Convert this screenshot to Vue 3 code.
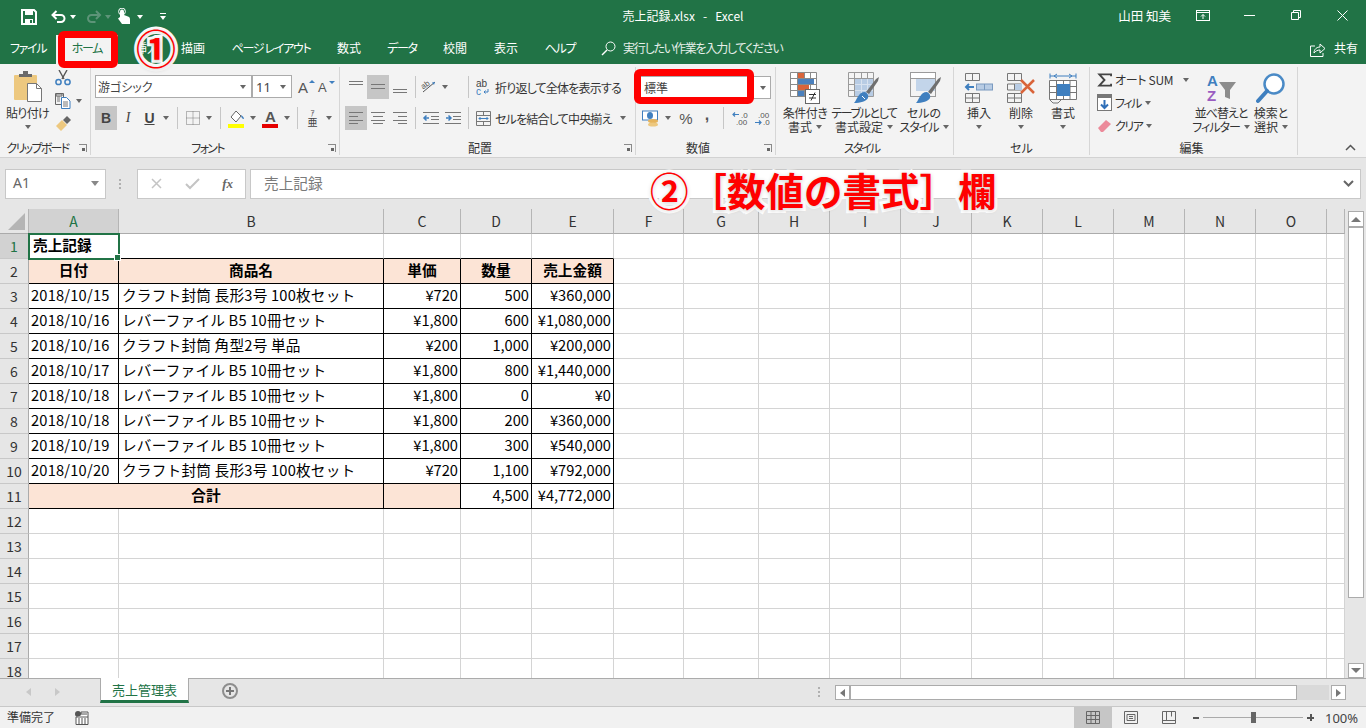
<script setup>
const tabs = [
  { t: 'ファイル', w: 56, k: true }, { t: 'ホーム', w: 62, on: true, k: true }, { t: '挿入', w: 58 }, { t: '描画', w: 34 },
  { t: 'ページ レイアウト', w: 122, k: true }, { t: '数式', w: 34 }, { t: 'データ', w: 72, k: true }, { t: '校閲', w: 34 },
  { t: '表示', w: 68 }, { t: 'ヘルプ', w: 40, k: true }
]
const colW = [90, 265, 77, 71, 82, 70, 75, 71, 71, 71, 71, 71, 71, 71, 71, 18]
const colN = ['A','B','C','D','E','F','G','H','I','J','K','L','M','N','O','']
const gridCols = '29px ' + colW.map(w => w + 'px').join(' ')
const A = 'クラフト封筒 長形3号 100枚セット'
const B = 'レバーファイル B5 10冊セット'
const data = [
  ['2018/10/15', A, '¥720', '500', '¥360,000'],
  ['2018/10/16', B, '¥1,800', '600', '¥1,080,000'],
  ['2018/10/16', 'クラフト封筒 角型2号 単品', '¥200', '1,000', '¥200,000'],
  ['2018/10/17', B, '¥1,800', '800', '¥1,440,000'],
  ['2018/10/18', B, '¥1,800', '0', '¥0'],
  ['2018/10/18', B, '¥1,800', '200', '¥360,000'],
  ['2018/10/19', B, '¥1,800', '300', '¥540,000'],
  ['2018/10/20', A, '¥720', '1,100', '¥792,000']
]
const cells = []
for (let r = 1; r <= 18; r++) {
  cells.push({ k: 'h' + r, t: r, c: r === 1 ? 'rh rh-on' : 'rh' })
  for (let i = 0; i < 16; i++) {
    const k = r + '-' + i
    if (r === 1) {
      cells.push({ k, t: i === 0 ? '売上記録' : '', c: i === 0 ? 'cell sel bold lp' : i < 5 ? 'cell bb' : 'cell' })
    } else if (r === 2 && i < 5) {
      cells.push({ k, t: ['日付','商品名','単価','数量','売上金額'][i], c: 'cell bk peach bold ctr' })
    } else if (r >= 3 && r <= 10 && i < 5) {
      cells.push({ k, t: data[r-3][i], c: 'cell bk ' + (i === 0 ? 'dp' : i === 1 ? 'np' : 'rt') })
    } else if (r === 11 && i < 5) {
      if (i === 0) cells.push({ k, t: '合計', c: 'cell bk peach bold ctr span2' })
      else if (i === 2) cells.push({ k, t: '', c: 'cell bk peach' })
      else if (i === 3) cells.push({ k, t: '4,500', c: 'cell bk rt' })
      else if (i === 4) cells.push({ k, t: '¥4,772,000', c: 'cell bk rt' })
    } else {
      cells.push({ k, t: '', c: 'cell' })
    }
  }
}
</script>

<template>
  <div class="app">
    <header class="title">
      <div class="qat">
        <svg class="q1" width="16" height="16" viewBox="0 0 16 16"><path d="M1 1h12l2 2v12H1z" fill="none" stroke="#fff" stroke-width="2"/><rect x="4" y="2" width="8" height="4" fill="#fff"/><rect x="4" y="10" width="8" height="5" fill="#fff"/><rect x="9" y="11" width="2" height="3" fill="#217346"/></svg>
        <svg class="q2" width="15" height="13" viewBox="0 0 15 13"><path d="M2 5h8a3.500 3.500 0 0 1 0 7H6" fill="none" stroke="#fff" stroke-width="2"/><path d="M5.500 1L1.500 5l4 4" fill="none" stroke="#fff" stroke-width="2"/></svg>
        <i class="car w q3"></i>
        <svg class="q4" width="16" height="13" viewBox="0 0 15 13"><path d="M13 5H5a3.500 3.500 0 0 0 0 7h4" fill="none" stroke="#5d9478" stroke-width="2"/><path d="M9.500 1l4 4-4 4" fill="none" stroke="#5d9478" stroke-width="2"/></svg>
        <i class="car m q5"></i>
        <svg class="q6" width="14" height="17" viewBox="0 0 14 17"><path d="M3 7V3.500a2 2 0 0 1 4 0V7l4 1.500c1.500.6 2 1.400 2 3V16H5L1 10.500 3 9z" fill="#fff"/><circle cx="5" cy="3.500" r="3.400" fill="none" stroke="#fff"/></svg>
        <i class="car w q7"></i>
        <span class="q8"><b></b><i class="car w"></i></span>
      </div>
      <div class="doc">売上記録.xlsx &nbsp;&nbsp;-&nbsp;&nbsp; Excel</div>
      <div class="win">
        <span class="user">山田 知美</span>
        <svg class="wi1" width="14" height="11" viewBox="0 0 14 11"><rect x=".5" y=".5" width="13" height="10" fill="none" stroke="#fff"/><path d="M1 2.500h12M7 9V4.500M5 6.500l2-2 2 2" fill="none" stroke="#fff"/></svg>
        <svg class="wi2" width="11" height="3" viewBox="0 0 11 3"><path d="M0 1.500h11" stroke="#fff"/></svg>
        <svg class="wi3" width="10" height="10" viewBox="0 0 10 10"><path d="M.5 2.500h7v7h-7zM2.500 2.500v-2h7v7h-2" fill="none" stroke="#fff"/></svg>
        <svg class="wi4" width="11" height="11" viewBox="0 0 11 11"><path d="M.5.500l10 10M10.500.500l-10 10" stroke="#fff"/></svg>
      </div>
    </header>

    <nav class="tabs">
      <span v-for="t in tabs" :key="t.t" class="tab" :class="{ on: t.on, k: t.k }" :style="{ width: t.w + 'px' }">{{ t.t }}</span>
      <svg class="lens" width="15" height="15" viewBox="0 0 15 15"><circle cx="9.500" cy="5.500" r="4.500" fill="none" stroke="#fff"/><path d="M6 9l-5 5" stroke="#fff" stroke-width="1.400"/></svg>
      <span class="tell">実行したい作業を入力してください</span>
      <span class="share">
        <svg width="16" height="15" viewBox="0 0 16 15"><path d="M5 4H.5v10.500H13V11" fill="none" stroke="#fff"/><path d="M4 11c0-4 3-6 6-6V2l5 4.500-5 4.500V8c-2.500 0-4.500 1-6 3z" fill="none" stroke="#fff"/></svg>
        <span class="sh">共有</span>
      </span>
    </nav>

    <section class="ribbon">
      <!-- クリップボード -->
      <div class="group g1">
        <div class="gbody row">
          <div class="bigb paste">
            <svg width="30" height="32" viewBox="0 0 30 32"><rect x="1" y="5" width="23" height="25" rx="1" fill="#edc87f"/><path d="M6 7V4h4V1h5v3h4v3z" fill="#6a6a6a"/><path d="M14.500 13.500h9l5 5v13h-14z" fill="#fff" stroke="#777"/><path d="M23.500 13.500v5h5" fill="none" stroke="#777"/></svg>
            <span class="bt t7">貼り付け</span>
            <span class="bt"><i class="car"></i></span>
          </div>
          <div class="cbcol">
            <svg width="16" height="16" viewBox="0 0 16 16"><path d="M4 0l5 9M12 0L7 9" stroke="#555" stroke-width="1.400"/><circle cx="3.500" cy="12" r="2.600" fill="none" stroke="#3f7fbf" stroke-width="1.500"/><circle cx="12.500" cy="12" r="2.600" fill="none" stroke="#3f7fbf" stroke-width="1.500"/></svg>
            <span class="cpy">
              <svg width="16" height="16" viewBox="0 0 16 16"><path d="M1 1h6v2H1zM.5.500h8v11h-8z" fill="none" stroke="#666"/><path d="M6.500 4.500h5l3.500 3.500v7.500h-8.500z" fill="#fff" stroke="#3f7fbf"/><path d="M8 9h5M8 11h5M8 13h5M2 4h3M2 6h3M2 8h3" stroke="#777"/></svg>
              <i class="car"></i>
            </span>
            <svg width="16" height="16" viewBox="0 0 16 16"><path d="M1 10l6-6 5 5-6 6z" fill="#edc87f"/><path d="M9 3l3-3 4 4-3 3 -1 1-4-4z" fill="#666"/></svg>
          </div>
        </div>
        <div class="glabel lab1">クリップボード<i class="launch"></i></div>
      </div>

      <!-- フォント -->
      <div class="group g2">
        <div class="gbody stack">
          <div class="srow">
            <span class="combo fn">游ゴシック<i class="car"></i></span>
            <span class="combo fs">11<i class="car"></i></span>
            <span class="aup">A<em class="tri up"></em></span>
            <span class="adn">A<em class="tri dn"></em></span>
          </div>
          <div class="srow">
            <span class="b w22 pressed fb">B</span>
            <span class="b w22 fi">I</span>
            <span class="b w21 fu">U</span>
            <span class="b w12"><i class="car"></i></span>
            <span class="sep w10"></span>
            <span class="b w21">
              <svg width="14" height="14" viewBox="0 0 14 14"><path d="M.5.500h13v13H.5zM7 .500v13M.5 7h13" fill="none" stroke="#777" stroke-dasharray="1 1"/></svg>
            </span>
            <span class="b w12"><i class="car"></i></span>
            <span class="sep w10"></span>
            <span class="b w22 colb">
              <svg width="17" height="19" viewBox="0 0 17 19"><path d="M3 8l5-6 5 5-5 6z" fill="#fff" stroke="#666"/><path d="M13 6c2 1 3 3 3 4-2 0-3-2-3-4z" fill="#3f7fbf"/><rect x="0" y="15" width="16" height="4" fill="#ffff00"/></svg>
            </span>
            <span class="b w12"><i class="car"></i></span>
            <span class="b w22 colb">
              <svg width="17" height="19" viewBox="0 0 17 19"><text x="8.500" y="13" font-size="15" text-anchor="middle" fill="#555" font-family="Liberation Sans, sans-serif" font-weight="700">A</text><rect x="0" y="15" width="16" height="4" fill="#e60000"/></svg>
            </span>
            <span class="b w11"><i class="car"></i></span>
            <span class="sep w10"></span>
            <span class="b w21 ruby"><small>ｱ</small><b>亜</b></span>
            <span class="b w12"><i class="car"></i></span>
          </div>
        </div>
        <div class="glabel lab2">フォント<i class="launch"></i></div>
      </div>

      <!-- 配置 -->
      <div class="group g3">
        <div class="gbody stack">
          <div class="srow">
            <span class="b w22"><svg width="16" height="14" viewBox="0 0 16 14"><path d="M1 1.500h14M1 4.500h14" stroke="#777"/></svg></span>
            <span class="b w22 pressed"><svg width="16" height="14" viewBox="0 0 16 14"><path d="M1 4.500h14M1 8.500h14" stroke="#777"/></svg></span>
            <span class="b w22"><svg width="16" height="14" viewBox="0 0 16 14"><path d="M1 9.500h14M1 12.500h14" stroke="#777"/></svg></span>
            <span class="sep w8"></span>
            <span class="b w22"><svg class="ovis" width="18" height="16" viewBox="0 0 18 16"><path d="M2 13L14 3" stroke="#555"/><path d="M14 3l-3 .5 2 2.500z" fill="#3f7fbf"/><text x="1" y="9" font-size="8" fill="#555" font-family="Liberation Sans, sans-serif" transform="rotate(-35 4 8)">ab</text></svg></span>
            <span class="b w8"><i class="car"></i></span>
            <span class="sep w38"></span>
            <svg class="wrapi" width="14" height="17" viewBox="0 0 14 17"><text x="0" y="8" font-size="10" fill="#444" font-family="Liberation Sans, sans-serif">ab</text><text x="0" y="16" font-size="10" fill="#3f7fbf" font-family="Liberation Sans, sans-serif">c</text><path d="M12 10v3H8M9.500 11.500L8 13l1.500 1.500" fill="none" stroke="#3f7fbf"/></svg>
            <span class="lt lt2">折り返して全体を表示する</span>
          </div>
          <div class="srow">
            <span class="b w22 pressed"><svg width="16" height="14" viewBox="0 0 16 14"><path d="M1 1.500h14M1 5.500h9M1 9.500h14M1 12.500h9" stroke="#777"/></svg></span>
            <span class="b w22"><svg width="16" height="14" viewBox="0 0 16 14"><path d="M1 1.500h14M3 5.500h10M1 9.500h14M3 12.500h10" stroke="#777"/></svg></span>
            <span class="b w22"><svg width="16" height="14" viewBox="0 0 16 14"><path d="M1 1.500h14M6 5.500h9M1 9.500h14M6 12.500h9" stroke="#777"/></svg></span>
            <span class="sep w8"></span>
            <span class="b w22"><svg width="17" height="14" viewBox="0 0 17 14"><path d="M1 1.500h16M9 5.500h8M9 8.500h8M1 12.500h16" stroke="#777"/><path d="M7 7H3M4.500 4.500L2 7l2.500 2.500" fill="none" stroke="#3f7fbf" stroke-width="1.500"/></svg></span>
            <span class="b w22"><svg width="17" height="14" viewBox="0 0 17 14"><path d="M1 1.500h16M9 5.500h8M9 8.500h8M1 12.500h16" stroke="#777"/><path d="M2 7h4M4.500 4.500L7 7 4.500 9.500" fill="none" stroke="#3f7fbf" stroke-width="1.500"/></svg></span>
            <span class="sep w10"></span>
            <svg class="mergei" width="15" height="15" viewBox="0 0 15 15"><path d="M.5.500h14v14H.5zM.5 4.500h14M.5 10.500h14M7.500.500v4M7.500 10.500v4" fill="none" stroke="#777"/><path d="M3 7.500h9M4.500 6L3 7.500 4.500 9M10.500 6L12 7.500 10.500 9" fill="none" stroke="#3f7fbf"/></svg>
            <span class="lt lt2">セルを結合して中央揃え</span>
            <i class="car mcar"></i>
          </div>
        </div>
        <div class="glabel">配置<i class="launch"></i></div>
      </div>

      <!-- 数値 -->
      <div class="group g4">
        <div class="gbody stack">
          <div class="srow">
            <span class="combo nf">標準<i class="car"></i></span>
          </div>
          <div class="srow">
            <span class="b w22 cur">
              <svg width="17" height="17" viewBox="0 0 17 17"><rect x=".5" y="1" width="15" height="9" fill="#fff" stroke="#3f7fbf"/><ellipse cx="8" cy="5.500" rx="3" ry="3.500" fill="#3f7fbf"/><ellipse cx="11" cy="11" rx="5" ry="2" fill="#e6b45c"/><ellipse cx="11" cy="14.500" rx="5" ry="2" fill="#edc87f"/></svg>
            </span>
            <span class="b w13"><i class="car"></i></span>
            <span class="b w24 pct">%</span>
            <span class="b w18 cma">,</span>
            <span class="sep w14"></span>
            <span class="b w22 dec"><svg width="18" height="15" viewBox="0 0 18 15"><path d="M1 3.500h6M3 1.500L1 3.500l2 2" fill="none" stroke="#3f7fbf" stroke-width="1.200"/><text x="9" y="7" font-size="8" fill="#555" font-family="Liberation Sans, sans-serif">.0</text><text x="4" y="14" font-size="8" fill="#555" font-family="Liberation Sans, sans-serif">.00</text></svg></span>
            <span class="b w22 dec"><svg width="18" height="15" viewBox="0 0 18 15"><path d="M1 11.500h6M5 9.500l2 2-2 2" fill="none" stroke="#3f7fbf" stroke-width="1.200"/><text x="4" y="7" font-size="8" fill="#555" font-family="Liberation Sans, sans-serif">.00</text><text x="9" y="14" font-size="8" fill="#555" font-family="Liberation Sans, sans-serif">.0</text></svg></span>
          </div>
        </div>
        <div class="glabel">数値<i class="launch"></i></div>
      </div>

      <!-- スタイル -->
      <div class="group g5">
        <div class="gbody row">
          <div class="bigb w58">
            <svg width="30" height="32" viewBox="0 0 30 32"><path d="M.5.500h26v24H.5zM.5 6.500h26M.5 12.500h26M.5 18.500h26M7.500.500v24M14.500.500v24M20.500.500v24" fill="#fff" stroke="#8a8a8a"/><rect x="8" y="1" width="6" height="5" fill="#d9643a"/><rect x="8" y="7" width="16" height="5" fill="#4a80bd"/><rect x="8" y="13" width="11" height="5" fill="#d9643a"/><rect x="8" y="19" width="6" height="5" fill="#4a80bd"/><rect x="15.500" y="17.500" width="14" height="14" fill="#fff" stroke="#666"/><path d="M19 22.500h7M19 26h7M25 20.500l-4 8" stroke="#333"/></svg>
            <span class="bt t5">条件付き</span>
            <span class="bt">書式<i class="car ml"></i></span>
          </div>
          <div class="bigb w60">
            <svg width="32" height="32" viewBox="0 0 32 32"><path d="M.5.500h25v24H.5zM.5 6.500h25M.5 12.500h25M.5 18.500h25M6.500.500v24M13.500.500v24M19.500.500v24" fill="#f4f4f4" stroke="#9a9a9a"/><rect x="7" y="7" width="18" height="17" fill="#b8cce4"/><path d="M7 12.500h18M7 18.500h18M13.500 7v17M19.500 7v17" stroke="#d8e2ef"/><path d="M18 20L28 7l3-2-1 4-9 13z" fill="#6f6f6f"/><path d="M17 20c2 1 4 3 3 6-1 3-8 5-14 5 3-3 4-11 11-11z" fill="#3f7fbf"/><path d="M14 24l3 3" stroke="#fff"/></svg>
            <span class="bt t14">テーブルとして</span>
            <span class="bt">書式設定<i class="car ml"></i></span>
          </div>
          <div class="bigb w60">
            <svg width="34" height="32" viewBox="0 0 34 32"><rect x="3.500" y=".5" width="25" height="24" fill="#f4f4f4" stroke="#9a9a9a"/><rect x="3.500" y=".5" width="25" height="6" fill="#fff" stroke="#9a9a9a"/><rect x="9" y="7" width="19" height="12" fill="#c3d5ea"/><path d="M21 20L31 7l3-2-1 4-9 13z" fill="#6f6f6f"/><path d="M20 20c2 1 4 3 3 6-1 3-8 5-14 5 3-3 4-11 11-11z" fill="#3f7fbf"/></svg>
            <span class="bt">セルの</span>
            <span class="bt"><span class="t10">スタイル</span><i class="car ml"></i></span>
          </div>
        </div>
        <div class="glabel lab5">スタイル</div>
      </div>

      <!-- セル -->
      <div class="group g6">
        <div class="gbody row">
          <div class="bigb w42">
            <svg width="30" height="32" viewBox="0 0 30 32"><path d="M1.500 1.500h14v7h-14zM8.500 1.500v7M1.500 21.500h14v9h-14zM8.500 21.500v9M1.500 26h14" fill="none" stroke="#777"/><rect x="12.500" y="12" width="16" height="6" fill="#b8cce4" stroke="#7a9ac0"/><path d="M20.500 12v6" stroke="#7a9ac0"/><path d="M10 15H2M5 12l-3 3 3 3" fill="none" stroke="#3f7fbf" stroke-width="2"/></svg>
            <span class="bt">挿入</span>
            <span class="bt"><i class="car"></i></span>
          </div>
          <div class="bigb w42">
            <svg width="30" height="32" viewBox="0 0 30 32"><path d="M1.500 1.500h14v7h-14zM8.500 1.500v7M1.500 21.500h14v9h-14zM8.500 21.500v9M1.500 26h14M1.500 12h14v6h-14zM8.500 12v6" fill="none" stroke="#777"/><rect x="9" y="12" width="7" height="6" fill="#b8cce4"/><path d="M15 8l13 13M28 8L15 21" stroke="#d9643a" stroke-width="2.500"/></svg>
            <span class="bt">削除</span>
            <span class="bt"><i class="car"></i></span>
          </div>
          <div class="bigb w42">
            <svg width="28" height="32" viewBox="0 0 28 32"><path d="M1 4h26M1 1.500v5M27 1.500v5M5 4l3-2M5 4l3 2M23 4l-3-2M23 4l-3 2" fill="none" stroke="#3f7fbf"/><path d="M.5 8.500h27v19H.5zM.5 14.500h27M.5 20.500h27M7.500 8.500v19M14.500 8.500v19M21 8.500v19" fill="#fff" stroke="#777"/><rect x="8" y="12" width="13" height="12" fill="#3f7fbf"/><path d="M1 28l3 3 5 0 3-3" fill="none" stroke="#777"/></svg>
            <span class="bt">書式</span>
            <span class="bt"><i class="car"></i></span>
          </div>
        </div>
        <div class="glabel nop">セル</div>
      </div>

      <!-- 編集 -->
      <div class="group g7">
        <div class="gbody row">
          <div class="edcol">
            <div class="edr">
              <svg width="16" height="16" viewBox="0 0 16 16"><path d="M15 4V2H2.500l5.500 6-5.500 6H15v-2" fill="none" stroke="#444" stroke-width="2"/></svg>
              <span class="sum">オート SUM</span><i class="car c1"></i>
            </div>
            <div class="edr">
              <svg width="15" height="17" viewBox="0 0 15 17"><rect x=".5" y=".5" width="14" height="16" fill="#fff" stroke="#777"/><rect x="1" y="1" width="13" height="3" fill="#777"/><path d="M7.500 6v8M4 10.500l3.500 3.500 3.500-3.500" fill="none" stroke="#2f6fb8" stroke-width="2"/></svg>
              <span class="t15">フィル</span><i class="car c2"></i>
            </div>
            <div class="edr">
              <svg width="15" height="15" viewBox="0 0 15 15"><path d="M1 10l8-8 5 4-8 8H4z" fill="#ec8a9a"/></svg>
              <span class="t15">クリア</span><i class="car c2"></i>
            </div>
          </div>
          <div class="bigb w52">
            <svg class="ovis" width="32" height="32" viewBox="0 0 32 32"><text x="2" y="14" font-size="15" font-weight="700" fill="#3f7fbf" font-family="Liberation Sans, sans-serif">A</text><text x="2" y="29" font-size="15" font-weight="700" fill="#9a5cc0" font-family="Liberation Sans, sans-serif">Z</text><path d="M14 10h17l-6 8v9l-5-2v-7z" fill="#8c8c8c"/></svg>
            <span class="bt t10">並べ替えと</span>
            <span class="bt"><span class="t10">フィルター</span><i class="car ml"></i></span>
          </div>
          <div class="bigb w48">
            <svg width="30" height="32" viewBox="0 0 30 32"><circle cx="18" cy="12" r="9.500" fill="#fff" stroke="#4a8ac6" stroke-width="2.500"/><path d="M11 19L2 29" stroke="#3f7fbf" stroke-width="4" stroke-linecap="round"/></svg>
            <span class="bt">検索と</span>
            <span class="bt">選択<i class="car ml"></i></span>
          </div>
        </div>
        <div class="glabel nop2">編集</div>
      </div>
      <svg class="collapse" width="11" height="7" viewBox="0 0 11 7"><path d="M1 6l4.500-4.500L10 6" fill="none" stroke="#555" stroke-width="1.500"/></svg>
    </section>

    <section class="fbar">
      <div class="name"><span>A1</span><i class="car dk"></i></div>
      <span class="dots"></span>
      <div class="fbtns">
        <svg width="13" height="13" viewBox="0 0 13 13"><path d="M2 2l9 9M11 2l-9 9" stroke="#c4c4c4" stroke-width="1.500"/></svg>
        <svg width="15" height="13" viewBox="0 0 15 13"><path d="M1 7l4 4 9-9" fill="none" stroke="#c4c4c4" stroke-width="2"/></svg>
        <span class="fx">fx</span>
      </div>
      <div class="finput"><span>売上記録</span>
        <svg width="11" height="7" viewBox="0 0 11 7"><path d="M1 1l4.500 4.500L10 1" fill="none" stroke="#666" stroke-width="2"/></svg>
      </div>
    </section>

    <section class="sheet">
      <div class="grid" :style="{ gridTemplateColumns: gridCols }">
        <div class="corner"><b></b></div>
        <div v-for="(n, i) in colN" :key="'c' + i" class="ch" :class="{ 'ch-on': i === 0 }">{{ n }}</div>
        <div v-for="c in cells" :key="c.k" :class="c.c">{{ c.t }}</div>
      </div>
      <aside class="vs">
        <span class="sb"><i class="tri2 up2"></i></span>
        <span class="thumb"></span>
        <span class="sb end"><i class="tri2 dn2"></i></span>
      </aside>
    </section>

    <section class="tabbar">
      <span class="nav"><i class="nl"></i><i class="nr"></i></span>
      <span class="stab">売上管理表</span>
      <span class="plus"></span>
      <span class="hdots"></span>
      <div class="hs">
        <span class="hb"><i class="hl"></i></span>
        <span class="hthumb"></span>
        <span class="htrack"></span>
        <span class="hb"><i class="hr"></i></span>
      </div>
    </section>

    <footer class="status">
      <span>準備完了</span>
      <svg class="macro" width="14" height="14" viewBox="0 0 14 14"><circle cx="3" cy="3" r="3" fill="#555"/><path d="M1 6h12V1H6v2h6v0M1 6v7.500h12V6" fill="#fff" stroke="#555"/><path d="M3 8h2M6 8h2M9 8h2M3 10h2M6 10h2M9 10h2M3 12h2M6 12h2M9 12h2" stroke="#555"/></svg>
      <div class="views">
        <span class="vb von"><svg width="14" height="13" viewBox="0 0 14 13"><path d="M.5.500h13v12H.5zM.5 4.500h13M.5 8.500h13M5 .500v12M9.500.500v12" fill="none" stroke="#666"/></svg></span>
        <span class="vb"><svg width="14" height="13" viewBox="0 0 14 13"><path d="M.5.500h13v12H.5z" fill="none" stroke="#666"/><path d="M3 3.500h8v6H3zM5 5.500h4M5 7.500h4" fill="none" stroke="#666"/></svg></span>
        <span class="vb"><svg width="14" height="13" viewBox="0 0 14 13"><path d="M.5.500h13v12H.5zM.5 9.500h13M4.500.500v9M9.500.500v5" fill="none" stroke="#666"/></svg></span>
      </div>
      <div class="zoom">
        <span class="zm"></span>
        <span class="slider"><b></b></span>
        <span class="zp"></span>
        <span class="pc">100%</span>
      </div>
    </footer>

    <!-- 注釈 -->
    <div class="red red1"></div>
    <div class="red red2"></div>
    <div class="no1">①</div>
    <div class="note">②［数値の書式］欄</div>
  </div>
</template>

<style>
html, body { margin: 0; overflow: hidden; background: #fff; }
</style>

<style scoped>
.app {
  position: relative; width: 1366px; height: 728px; overflow: hidden; display: flex; flex-direction: column;
  font-family: "Noto Sans CJK JP", "Noto Sans", sans-serif; font-size: 12px; color: #333;
  font-feature-settings: "palt";
}
i { display: inline-block; font-style: normal; }
svg { display: block; flex: none; }
.ovis { overflow: visible; }
.car { width: 0; height: 0; border-left: 3.5px solid transparent; border-right: 3.5px solid transparent; border-top: 4px solid #666; vertical-align: middle; flex: none; }
.car.w { border-top-color: #fff; }
.car.m { border-top-color: #5d9478; }
.car.ml { margin-left: 4px; }
.t5 { letter-spacing: -.5px; } .t7 { letter-spacing: -.7px; } .t10 { letter-spacing: -1px; } .t14 { letter-spacing: -1.4px; } .t15 { letter-spacing: -1.5px; }

/* title */
.title { height: 35px; padding-bottom: 5px; box-sizing: border-box; background: #217346; color: #fff; display: grid; grid-template-columns: 1fr auto 1fr; align-items: center; flex: none; }
.qat { display: flex; align-items: center; padding-left: 21px; padding-top: 3px; }
.win svg { position: relative; top: 0; }
.q2 { margin-left: 14px; } .q3 { margin-left: 4px; } .q4 { margin-left: 10px; } .q5 { margin-left: 3px; }
.q6 { margin-left: 6px; } .q7 { margin-left: 6px; }
.q8 { margin-left: 17px; display: flex; flex-direction: column; align-items: center; gap: 2px; }
.q8 b { width: 6px; height: 1px; background: #fff; }
.doc { font-size: 12px; text-align: center; white-space: nowrap; }
.win { display: flex; align-items: center; justify-content: flex-end; padding-right: 18px; }
.user { font-size: 12.5px; margin-right: 25px; }
.wi2 { margin-left: 34px; } .wi3 { margin-left: 36px; } .wi4 { margin-left: 36px; }

/* tabs */
.tabs { height: 29px; background: #217346; color: #fff; display: flex; flex: none; align-items: center; }
.tab { text-align: center; flex: none; white-space: nowrap; line-height: 26px; height: 29px; }
.tab.k { letter-spacing: -1.3px; }
.tab.on { background: #f3f3f3; color: #217346; }
.lens { margin-left: 21px; margin-bottom: 2px; }
.tell { margin-left: 7px; color: #e6efe9; letter-spacing: -1.2px; line-height: 26px; height: 29px; }
.share { margin-left: auto; display: flex; align-items: center; gap: 8px; padding-right: 8px; font-size: 12px; }
.sh { line-height: 26px; height: 29px; }

/* ribbon */
.ribbon { height: 93px; background: #f3f3f3; border-bottom: 1px solid #d2d2d2; display: flex; flex: none; position: relative; }
.group { height: 88px; margin-top: 3px; padding-top: 5px; box-sizing: border-box; border-right: 1px solid #d6d6d6; display: flex; flex-direction: column; flex: none; position: relative; }
.gbody { height: 68px; flex: none; }
.row { display: flex; }
.stack { display: flex; flex-direction: column; gap: 7px; padding-top: 3px; }
.srow { display: flex; align-items: center; height: 24px; }
.glabel { text-align: center; padding-right: 15px; line-height: 15px; height: 15px; white-space: nowrap; font-size: 12px; }
.glabel.nop { padding-right: 0; }
.glabel.nop2 { padding-right: 4px; }
.lab1 { letter-spacing: -1.7px; }
.lab2 { letter-spacing: -1.7px; }
.lab5 { letter-spacing: -2px; padding-right: 6px; }
.launch { position: absolute; right: 3px; bottom: 3px; width: 7px; height: 7px; border-left: 1px solid #8a8a8a; border-bottom: 1px solid #8a8a8a; transform: scaleX(-1) rotate(90deg); }
.launch::after { content: ""; display: block; width: 3px; height: 3px; background: #666; margin-left: 3px; margin-top: 3px; }
.g1 { width: 91px; } .g2 { width: 249px; } .g3 { width: 296px; } .g4 { width: 140px; } .g5 { width: 178px; } .g6 { width: 136px; } .g7 { width: 208px; }
.bigb { display: flex; flex-direction: column; align-items: center; white-space: nowrap; flex: none; }
.bigb svg { margin-top: 0; height: 32px; }
.bt { line-height: 14px; height: 14px; display: flex; align-items: center; }
.bigb svg + .bt { margin-top: 2px; }
.w58 { width: 58px; } .w60 { width: 60px; } .w42 { width: 42px; } .w52 { width: 52px; } .w48 { width: 48px; }
.paste { width: 55px; margin-top: -2px; }
.paste svg + .bt { margin-top: 4px; }
.cbcol { display: flex; flex-direction: column; gap: 7px; margin-top: -2px; }
.cpy { display: flex; align-items: center; gap: 5px; }
.g2 .gbody { padding-left: 4px; box-sizing: border-box; }
.combo { height: 23px; box-sizing: border-box; background: #fff; border: 1px solid #ababab; display: flex; align-items: center; justify-content: space-between; padding: 0 5px 0 2px; margin-top: -1px; color: #444; }
.fn { width: 157px; } .fs { width: 40px; font-family: "Noto Sans", sans-serif; padding-left: 3px; font-size: 13px; }
.aup, .adn { position: relative; font-family: "Liberation Sans", sans-serif; font-size: 15px; color: #555; margin-left: 6px; width: 15px; }
.tri { position: absolute; top: 1px; right: -2px; width: 0; height: 0; border-left: 3px solid transparent; border-right: 3px solid transparent; }
.tri.up { border-bottom: 3px solid #3f7fbf; } .tri.dn { border-top: 3px solid #3f7fbf; }
.adn { font-size: 13px; margin-left: 5px; }
.b { display: flex; align-items: center; justify-content: center; height: 24px; flex: none; box-sizing: border-box; }
.w22 { width: 22px; } .w21 { width: 21px; } .w12 { width: 12px; } .w11 { width: 11px; } .w13 { width: 13px; } .w24 { width: 24px; } .w18 { width: 18px; } .w10 { width: 10px; }
.pressed { background: #c6c6c6; }
.fb, .fi, .fu { font-family: "Liberation Sans", sans-serif; font-size: 14px; color: #444; }
.fb { font-weight: 700; } .fi { font-style: italic; font-family: "Liberation Serif", serif; } .fu { text-decoration: underline; font-weight: 700; }
.sep { display: flex; justify-content: center; height: 24px; flex: none; }
.sep::before { content: ""; width: 1px; height: 22px; background: #c6c6c6; margin-top: 1px; }
.w8 { width: 8px; } .w38 { width: 38px; } .w14 { width: 14px; }
.ruby { flex-direction: column; font-size: 10px; line-height: 9px; color: #444; }
.ruby small { font-size: 8px; line-height: 8px; } .ruby b { font-weight: 400; font-size: 10px; line-height: 10px; }
.g3 .gbody { padding-left: 5px; box-sizing: border-box; }
.wrapi { margin-left: -11px; margin-right: 5px; }
.lt { white-space: nowrap; color: #333; }
.mergei { margin-left: 3px; margin-right: 4px; }
.lt2 { letter-spacing: -.8px; } .mcar { margin-left: 8px; }
.g4 .gbody { padding-left: 1px; box-sizing: border-box; }
.nf { width: 134px; padding-left: 6px; padding-right: 4px; margin-top: 1px; }
.cur { margin-left: 2px; } .pct { font-family: "Liberation Sans", sans-serif; font-size: 15px; color: #555; } .cma { font-family: "Liberation Sans", sans-serif; font-size: 16px; font-weight: 700; color: #555; padding-bottom: 6px; }
.g6 .gbody { padding-left: 4px; box-sizing: border-box; }
.edcol { width: 105px; padding-left: 7px; box-sizing: border-box; margin-top: -4px; flex: none; }
.edr { height: 23px; display: flex; align-items: center; white-space: nowrap; }
.edr span { margin-left: 3px; }
.edr svg { width: 15px; }
.sum { width: 58px; letter-spacing: -.3px; } .c1 { margin-left: 10px; } .c2 { margin-left: 4px; }
.collapse { position: absolute; right: 10px; bottom: 6px; }

/* formula */
.fbar { height: 51px; background: #e6e6e6; display: flex; align-items: center; padding: 0 5px; box-sizing: border-box; flex: none; gap: 4px; }
.name { width: 101px; height: 30px; box-sizing: border-box; background: #fff; border: 1px solid #c8c8c8; display: flex; align-items: center; justify-content: space-between; padding: 0 6px 0 7px; font-size: 14px; font-family: "Noto Sans", sans-serif; color: #666; }
.name span { margin-top: -2px; }
.car.dk { border-left-width: 4px; border-right-width: 4px; border-top-width: 5px; border-top-color: #888; }
.dots { width: 2px; height: 10px; margin: 0 12px 0 9px; background-image: linear-gradient(#b0b0b0 2px, transparent 2px); background-size: 2px 4px; }
.fbtns { width: 109px; height: 30px; box-sizing: border-box; background: #fff; border: 1px solid #c8c8c8; display: flex; align-items: center; justify-content: space-between; padding: 0 12px 0 12px; }
.fx { font-family: "Liberation Serif", serif; font-style: italic; font-weight: 700; color: #666; font-size: 13px; }
.finput { flex: 1; height: 30px; box-sizing: border-box; background: #fff; border: 1px solid #c8c8c8; display: flex; align-items: center; justify-content: space-between; padding: 0 6px 0 13px; color: #7a7a7a; font-size: 14.67px; font-feature-settings: normal; }
.finput span { margin-top: -2px; }

/* sheet */
.sheet { height: 469px; display: flex; overflow: hidden; flex: none; background: #e6e6e6; }
.grid { display: grid; grid-auto-rows: 25px; width: 1345px; flex: none; font-size: 14.67px; color: #000; font-feature-settings: normal; background: #fff; align-content: start; }
.corner { background: #e6e6e6; border-right: 1px solid #b5b5b5; border-bottom: 1px solid #ababab; position: relative; }
.corner b { position: absolute; right: 3px; bottom: 3px; width: 0; height: 0; border-left: 17px solid transparent; border-bottom: 17px solid #b5b5b5; }
.ch { background: #e6e6e6; border-right: 1px solid #b5b5b5; border-bottom: 1px solid #ababab; text-align: center; line-height: 24px; box-sizing: border-box; color: #333; font-size: 14px; }
.ch-on { background: #d2d2d2; color: #217346; }
.rh { background: #e6e6e6; border-right: 1px solid #ababab; border-bottom: 1px solid #c8c8c8; text-align: center; line-height: 24px; box-sizing: border-box; color: #333; font-size: 14px; }
.rh-on { background: #d2d2d2; color: #217346; }
.cell { border-right: 1px solid #d4d4d4; border-bottom: 1px solid #d4d4d4; box-sizing: border-box; line-height: 22px; white-space: nowrap; overflow: hidden; background: #fff; }
.bk { border-right-color: #000; border-bottom-color: #000; }
.bb { border-bottom-color: #000; }
.peach { background: #fce4d6; }
.bold { font-weight: 700; }
.ctr { text-align: center; }
.lp { padding-left: 4px; }
.dp { padding-left: 2px; letter-spacing: .2px; }
.np { padding-left: 3px; letter-spacing: .2px; }
.rt { text-align: right; padding-right: 2px; }
.span2 { grid-column: span 2; }
.sel { position: relative; overflow: visible; outline: 2px solid #217346; outline-offset: -1px; z-index: 2; border-bottom-color: #000; }
.sel::after { content: ""; position: absolute; right: -3px; bottom: -3px; width: 5px; height: 5px; background: #217346; border: 1px solid #fff; }
.vs { width: 21px; flex: none; display: flex; flex-direction: column; align-items: center; padding-top: 2px; box-sizing: border-box; }
.sb { width: 16px; height: 16px; box-sizing: border-box; background: #fff; border: 1px solid #ababab; display: flex; align-items: center; justify-content: center; flex: none; }
.sb.end { margin-top: auto; height: 15px; }
.thumb { width: 16px; height: 371px; box-sizing: border-box; background: #fff; border: 1px solid #ababab; flex: none; margin-top: 0; }
.tri2 { width: 0; height: 0; border-left: 5px solid transparent; border-right: 5px solid transparent; }
.up2 { border-bottom: 5px solid #777; } .dn2 { border-top: 5px solid #777; }

/* sheet tabs */
.tabbar { height: 29px; box-sizing: border-box; background: #e6e6e6; border-top: 1px solid #ababab; border-bottom: 1px solid #c8c8c8; display: flex; align-items: flex-start; flex: none; }
.nav { width: 100px; display: flex; padding-left: 26px; gap: 24px; box-sizing: border-box; height: 26px; align-items: center; }
.nl { width: 0; height: 0; border-top: 4px solid transparent; border-bottom: 4px solid transparent; border-right: 5px solid #c8c8c8; }
.nr { width: 0; height: 0; border-top: 4px solid transparent; border-bottom: 4px solid transparent; border-left: 5px solid #c8c8c8; }
.stab { width: 89px; height: 25px; box-sizing: border-box; background: #fff; border-left: 1px solid #ababab; border-right: 1px solid #ababab; border-bottom: 3px solid #217346; text-align: center; color: #217346; font-size: 13px; line-height: 23px; margin-top: -1px; font-feature-settings: normal; }
.plus { width: 16px; height: 16px; box-sizing: border-box; border: 2px solid #8e8e8e; border-radius: 50%; margin: 4px 0 0 33px; position: relative; }
.plus::before { content: ""; position: absolute; left: 2px; right: 2px; top: 5px; height: 2px; background: #777; }
.plus::after { content: ""; position: absolute; top: 2px; bottom: 2px; left: 5px; width: 2px; background: #777; }
.hdots { width: 2px; height: 10px; margin: 8px 0 0 580px; background-image: linear-gradient(#b0b0b0 2px, transparent 2px); background-size: 2px 4px; }
.hs { display: flex; margin: 6px 0 0 15px; align-items: stretch; height: 15px; }
.hb { width: 15px; box-sizing: border-box; background: #fff; border: 1px solid #ababab; display: flex; align-items: center; justify-content: center; flex: none; }
.hl { width: 0; height: 0; border-top: 4px solid transparent; border-bottom: 4px solid transparent; border-right: 5px solid #777; }
.hr { width: 0; height: 0; border-top: 4px solid transparent; border-bottom: 4px solid transparent; border-left: 5px solid #777; }
.hthumb { width: 447px; box-sizing: border-box; background: #fff; border: 1px solid #ababab; }
.htrack { width: 32px; background: #d9d9d9; margin-right: 2px; }

/* status */
.status { height: 21px; background: #f1f1f1; display: flex; align-items: center; padding-left: 7px; flex: none; color: #333; }
.status > span { line-height: 19px; height: 21px; }
.macro { margin-left: 20px; }
.views { display: flex; margin-left: auto; height: 21px; }
.vb { width: 38px; display: flex; align-items: center; justify-content: center; }
.von { background: #c6c6c6; }
.zoom { display: flex; align-items: center; width: 178px; padding-left: 5px; box-sizing: border-box; flex: none; }
.zm { width: 6px; height: 2px; background: #555; flex: none; }
.slider { width: 100px; height: 1px; background: #aaa; margin-left: 4px; position: relative; flex: none; }
.slider b { position: absolute; left: 48px; top: -5px; width: 5px; height: 11px; background: #666; }
.zp { width: 7px; height: 7px; margin-left: 4px; flex: none; background: linear-gradient(#555, #555) center/7px 2px no-repeat, linear-gradient(#555, #555) center/2px 7px no-repeat; }
.pc { margin-left: 11px; font-size: 13px; color: #444; font-family: "Noto Sans", sans-serif; }

/* annotations */
.red { position: absolute; box-sizing: border-box; border: 7px solid #f00; border-radius: 6px; }
.red1 { left: 58px; top: 31px; width: 60px; height: 37px; }
.red2 { left: 634px; top: 69px; width: 120px; height: 35px; }
.no1 { position: absolute; left: 135px; top: 17px; width: 42px; text-align: center; font-size: 40px; line-height: 60px; font-weight: 700; color: #f00; -webkit-text-stroke: 6px #fff; paint-order: stroke fill; text-shadow: 0 1px 4px rgba(0,0,0,.3); font-feature-settings: normal; }
.note { position: absolute; left: 650px; top: 164px; font-size: 38.5px; line-height: 50px; font-weight: 700; color: #f00; white-space: nowrap; -webkit-text-stroke: 6px #fff; paint-order: stroke fill; text-shadow: 0 1px 4px rgba(0,0,0,.2); font-feature-settings: normal; }
</style>
